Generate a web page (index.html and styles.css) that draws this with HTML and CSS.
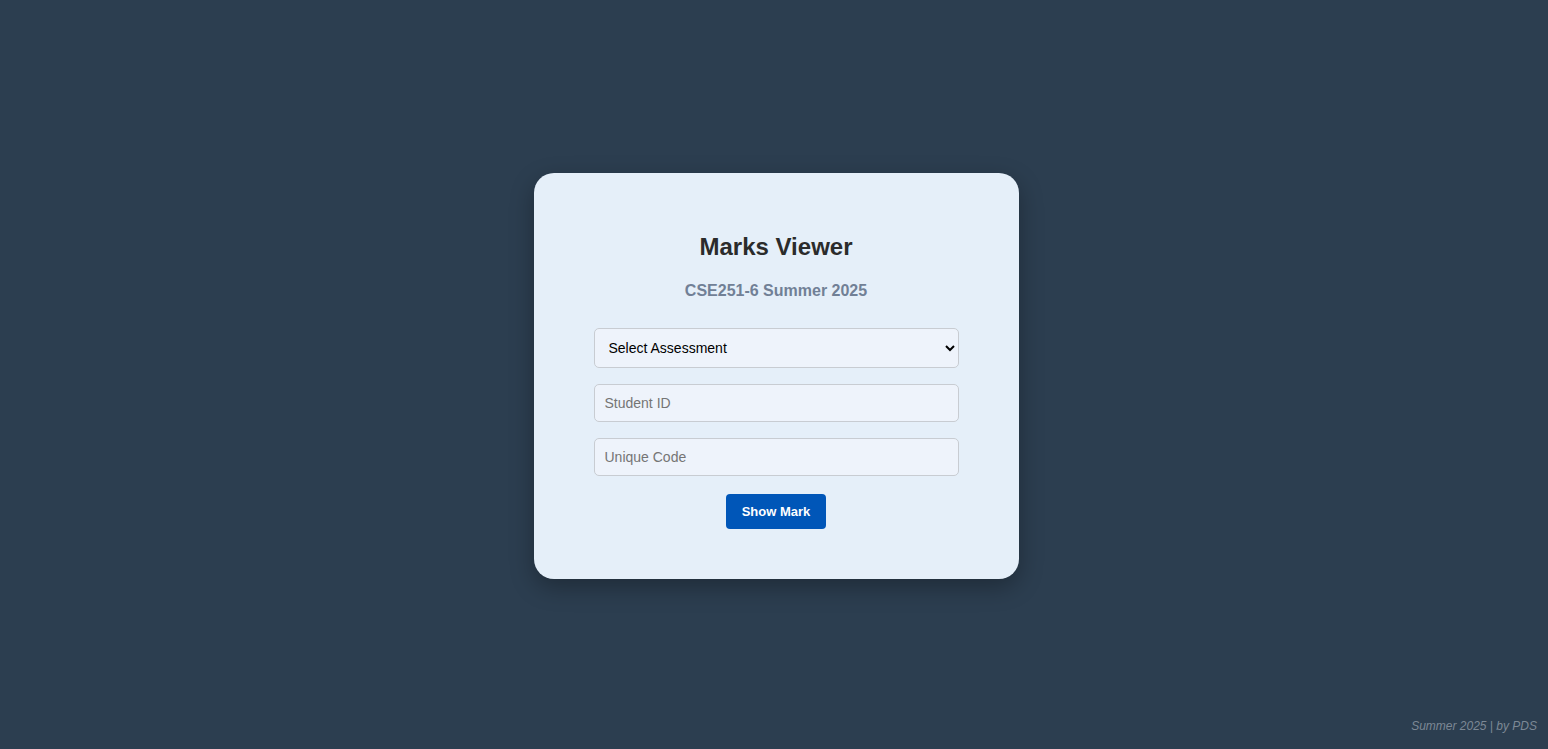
FILE: index.html
```html
<!DOCTYPE html>
<html lang="en">
<head>
<meta charset="utf-8">
<title>Marks Viewer</title>
<link rel="stylesheet" href="styles.css">
</head>
<body>
<div class="page">
  <main class="card">
    <h2 class="title">Marks Viewer</h2>
    <h4 class="subtitle">CSE251-6 Summer 2025</h4>
    <form class="form">
      <select class="field select">
        <option>Select Assessment</option>
      </select>
      <input class="field input" type="text" placeholder="Student ID">
      <input class="field input" type="text" placeholder="Unique Code">
      <button type="button" class="btn">Show Mark</button>
    </form>
  </main>
  <footer class="footer">Summer 2025 | by PDS</footer>
</div>
</body>
</html>
```
FILE: styles.css
```css
html, body {
  margin: 0;
  padding: 0;
}
body {
  background: #2c3e50;
  font-family: "Liberation Sans", Arial, sans-serif;
}
.page {
  display: grid;
  grid-template-areas: "main";
  height: 100vh;
  place-items: center;
}
.card {
  grid-area: main;
  box-sizing: border-box;
  width: 485px;
  background: #e5eff9;
  border-radius: 20px;
  padding: 40px 60px 50px;
  box-shadow: 0 8px 24px rgba(0, 0, 0, 0.3);
  text-align: center;
  transform: translate(2px, 1px);
}
.title {
  margin: 20px 0 21px;
  font-size: 24px;
  line-height: 28px;
  color: #2b2b2b;
  font-weight: bold;
}
.subtitle {
  margin: 0 0 28px;
  font-size: 16px;
  line-height: 18px;
  color: #718096;
  font-weight: bold;
}
.form {
  display: flex;
  flex-direction: column;
  gap: 16px;
  align-items: center;
}
.field {
  box-sizing: border-box;
  width: 100%;
  font-family: "Liberation Sans", Arial, sans-serif;
  font-size: 14px;
  background: #eef3fb;
  border: 1px solid #c8ccd2;
  border-radius: 5px;
  color: #000;
  margin: 0;
}
.select {
  height: 40px;
  padding: 0 10px;
}
.input {
  height: 38px;
  padding: 0 10px;
}
.input::placeholder {
  color: #757575;
}
.btn {
  margin-top: 2px;
  width: 100px;
  height: 35px;
  border: none;
  border-radius: 4px;
  background: #0056b8;
  color: #fff;
  font-family: "Liberation Sans", Arial, sans-serif;
  font-weight: bold;
  font-size: 13px;
  padding: 0;
}
.footer {
  grid-area: main;
  align-self: end;
  justify-self: end;
  margin: 0 11px 16px 0;
  font-size: 12px;
  font-style: italic;
  color: #7c8895;
}
```
